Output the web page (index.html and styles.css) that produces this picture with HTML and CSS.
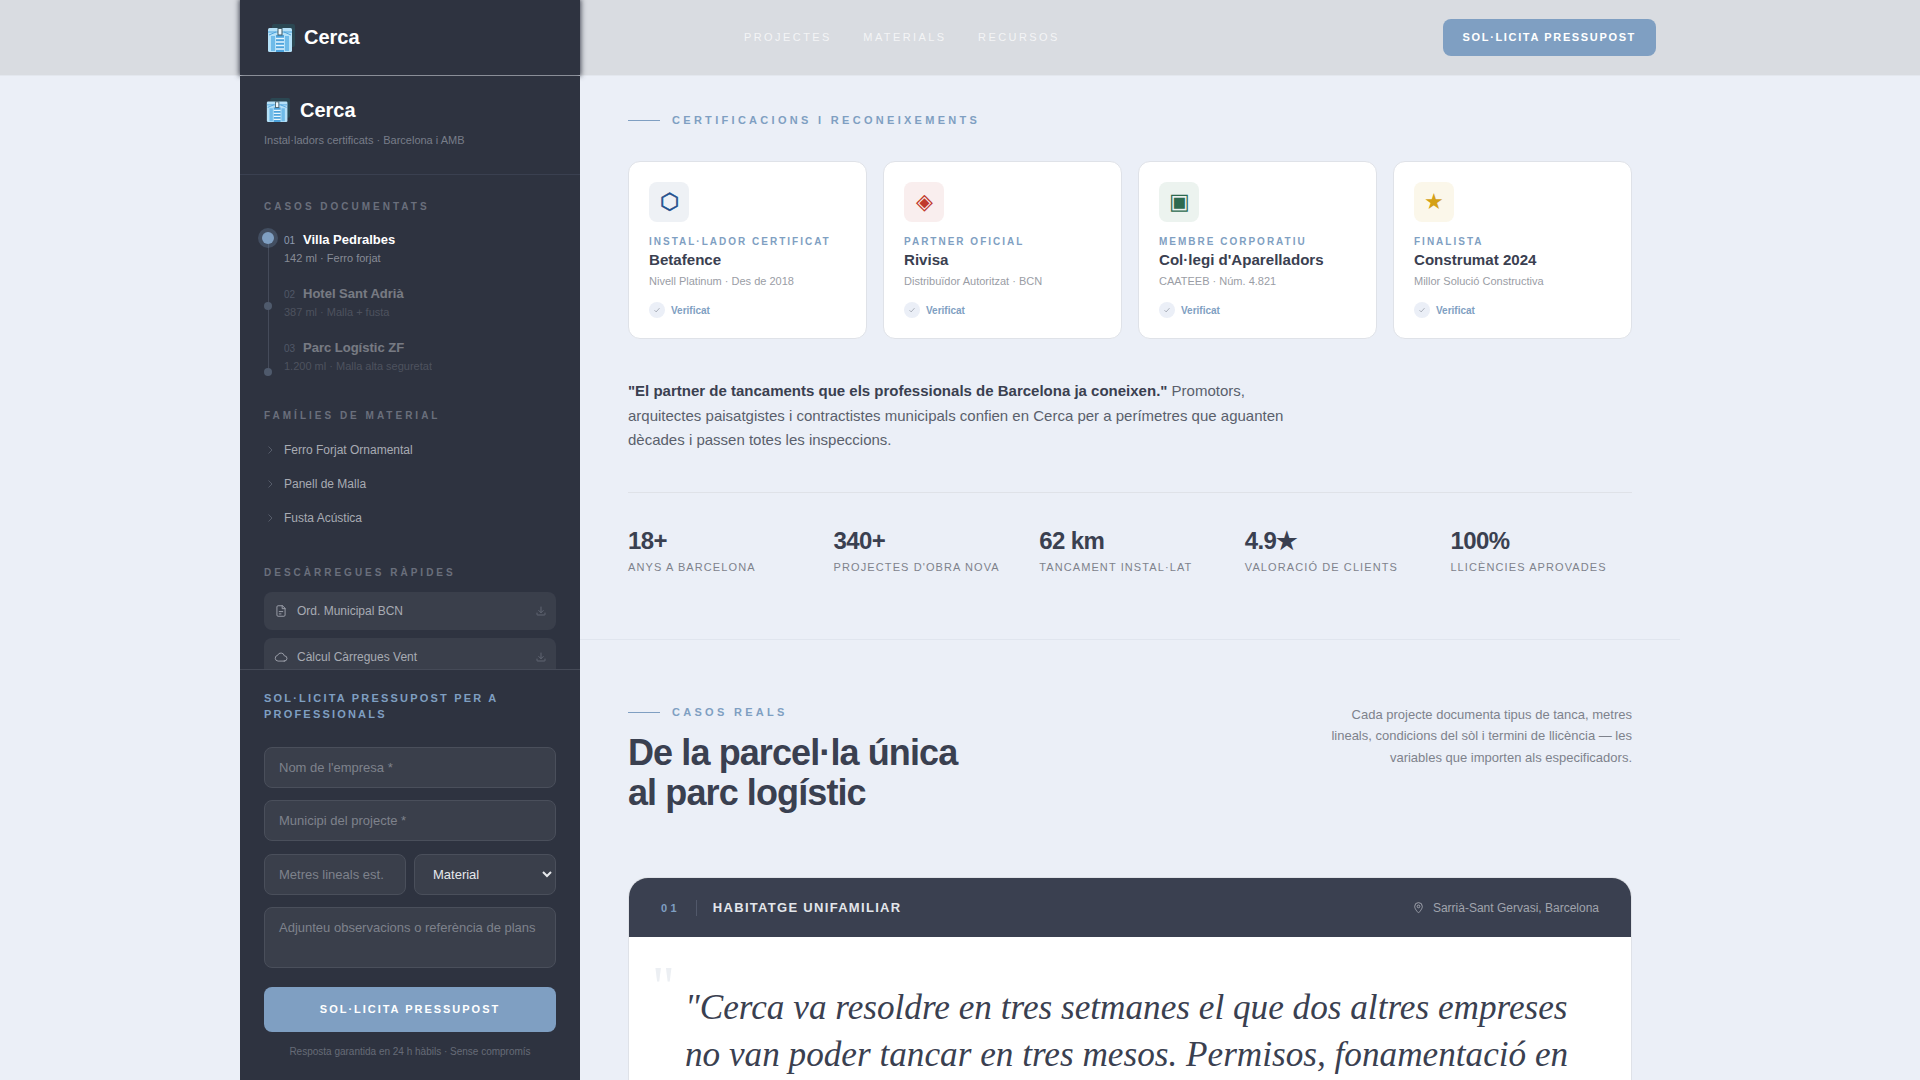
FILE: index.html
```html
<!DOCTYPE html>
<html lang="ca">
<head>
  <meta charset="UTF-8">
  <meta name="viewport" content="width=device-width, initial-scale=1.0">
  <title>Cerca</title>
  <link rel="stylesheet" href="styles.css">
</head>
<body>

  <!-- Top navigation -->
  <header class="topbar">
    <div class="topbar-inner">
      <div class="topbar-brand">
        <svg class="logo-icon" viewBox="0 0 28 28">
          <rect x="5" y="0" width="23" height="23" rx="2" fill="#2b4752"/>
          <rect x="1" y="4" width="24" height="24" rx="1.5" fill="#b5e1f8"/>
          <path d="M1 8h24M2 11l7-3M24 11l-7-3" stroke="#4da3dc" stroke-width="1" fill="none"/>
          <path d="M4 12h4v15H4zM18 12h4v15h-4z" fill="#6fbbe9"/>
          <rect x="9" y="11" width="8" height="17" fill="#4da3dc"/>
          <path d="M9 14.500h8M9 18h8M9 21.500h8M9 25h8" stroke="#e6f6fe" stroke-width="1.4"/>
          <rect x="11" y="4.500" width="4" height="6.500" fill="#eef8fd" stroke="#3f5a66" stroke-width="1"/>
        </svg>
        <span class="logo-text">Cerca</span>
      </div>
      <nav class="topbar-links">
        <a href="#">Projectes</a>
        <a href="#">Materials</a>
        <a href="#">Recursos</a>
      </nav>
      <a class="topbar-cta" href="#">Sol·licita Pressupost</a>
    </div>
  </header>

  <div class="page">

    <!-- Sidebar -->
    <aside class="sidebar">
      <div class="sidebar-scroll">
        <div class="sidebar-head">
          <div class="sidebar-brand">
            <svg class="logo-icon" viewBox="0 0 28 28">
              <rect x="5" y="0" width="23" height="23" rx="2" fill="#2b4752"/>
              <rect x="1" y="4" width="24" height="24" rx="1.5" fill="#b5e1f8"/>
              <path d="M1 8h24M2 11l7-3M24 11l-7-3" stroke="#4da3dc" stroke-width="1" fill="none"/>
              <path d="M4 12h4v15H4zM18 12h4v15h-4z" fill="#6fbbe9"/>
              <rect x="9" y="11" width="8" height="17" fill="#4da3dc"/>
              <path d="M9 14.500h8M9 18h8M9 21.500h8M9 25h8" stroke="#e6f6fe" stroke-width="1.4"/>
              <rect x="11" y="4.500" width="4" height="6.500" fill="#eef8fd" stroke="#3f5a66" stroke-width="1"/>
            </svg>
            <span class="logo-text">Cerca</span>
          </div>
          <p class="sidebar-sub">Instal·ladors certificats · Barcelona i AMB</p>
        </div>

        <div class="side-section side-cases">
          <h4 class="side-label">Casos Documentats</h4>
          <div class="case-wrap">
            <div class="case-rail">
              <span class="rail-dot active"></span>
              <span class="rail-dot"></span>
              <span class="rail-dot"></span>
            </div>
            <ul class="case-list">
              <li class="case-item active">
                <div class="case-title"><span class="case-num">01</span><b>Villa Pedralbes</b></div>
                <div class="case-sub">142 ml · Ferro forjat</div>
              </li>
              <li class="case-item">
                <div class="case-title"><span class="case-num">02</span><b>Hotel Sant Adrià</b></div>
                <div class="case-sub">387 ml · Malla + fusta</div>
              </li>
              <li class="case-item">
                <div class="case-title"><span class="case-num">03</span><b>Parc Logístic ZF</b></div>
                <div class="case-sub">1.200 ml · Malla alta seguretat</div>
              </li>
            </ul>
          </div>
        </div>

        <div class="side-section side-materials">
          <h4 class="side-label">Famílies de Material</h4>
          <ul class="material-list">
            <li><svg viewBox="0 0 24 24"><path d="M9 5l7 7-7 7"/></svg>Ferro Forjat Ornamental</li>
            <li><svg viewBox="0 0 24 24"><path d="M9 5l7 7-7 7"/></svg>Panell de Malla</li>
            <li><svg viewBox="0 0 24 24"><path d="M9 5l7 7-7 7"/></svg>Fusta Acústica</li>
          </ul>
        </div>

        <div class="side-section side-downloads">
          <h4 class="side-label">Descàrregues Ràpides</h4>
          <a class="dl-item" href="#">
            <svg class="dl-icon" viewBox="0 0 24 24"><path d="M14 3H7a2 2 0 0 0-2 2v14a2 2 0 0 0 2 2h10a2 2 0 0 0 2-2V8z"/><path d="M14 3v5h5M9 13h6M9 17h3"/></svg>
            <span>Ord. Municipal BCN</span>
            <svg class="dl-arrow" viewBox="0 0 24 24"><path d="M12 4v11M7.500 11l4.500 4.500 4.500-4.500M4 16v3a1 1 0 0 0 1 1h14a1 1 0 0 0 1-1v-3"/></svg>
          </a>
          <a class="dl-item" href="#">
            <svg class="dl-icon" viewBox="0 0 24 24"><path d="M17.500 19H7a5 5 0 0 1-.8-9.900A6 6 0 0 1 17.700 10h.3a4.500 4.500 0 0 1-.5 9z"/></svg>
            <span>Càlcul Càrregues Vent</span>
            <svg class="dl-arrow" viewBox="0 0 24 24"><path d="M12 4v11M7.500 11l4.500 4.500 4.500-4.500M4 16v3a1 1 0 0 0 1 1h14a1 1 0 0 0 1-1v-3"/></svg>
          </a>
        </div>
      </div>

      <form class="quote-form">
        <h3>Sol·licita Pressupost per a Professionals</h3>
        <input type="text" placeholder="Nom de l'empresa *">
        <input type="text" placeholder="Municipi del projecte *">
        <div class="form-row">
          <input type="text" placeholder="Metres lineals est.">
          <select>
            <option>Material</option>
          </select>
        </div>
        <textarea placeholder="Adjunteu observacions o referència de plans"></textarea>
        <button type="button">Sol·licita Pressupost</button>
        <p class="form-note">Resposta garantida en 24 h hàbils · Sense compromís</p>
      </form>
    </aside>

    <!-- Main content -->
    <main class="main">
      <section class="certs">
        <div class="eyebrow"><span></span>Certificacions i Reconeixements</div>

        <div class="cert-grid">
          <div class="cert-card">
            <div class="cert-icon blue">⬡</div>
            <div class="cert-type">Instal·lador Certificat</div>
            <div class="cert-name">Betafence</div>
            <div class="cert-sub">Nivell Platinum · Des de 2018</div>
            <div class="cert-check"><i><svg viewBox="0 0 24 24"><path d="M6 12.500l4 4 8-9"/></svg></i>Verificat</div>
          </div>
          <div class="cert-card">
            <div class="cert-icon red">◈</div>
            <div class="cert-type">Partner Oficial</div>
            <div class="cert-name">Rivisa</div>
            <div class="cert-sub">Distribuïdor Autoritzat · BCN</div>
            <div class="cert-check"><i><svg viewBox="0 0 24 24"><path d="M6 12.500l4 4 8-9"/></svg></i>Verificat</div>
          </div>
          <div class="cert-card">
            <div class="cert-icon green">▣</div>
            <div class="cert-type">Membre Corporatiu</div>
            <div class="cert-name">Col·legi d'Aparelladors</div>
            <div class="cert-sub">CAATEEB · Núm. 4.821</div>
            <div class="cert-check"><i><svg viewBox="0 0 24 24"><path d="M6 12.500l4 4 8-9"/></svg></i>Verificat</div>
          </div>
          <div class="cert-card">
            <div class="cert-icon gold">★</div>
            <div class="cert-type">Finalista</div>
            <div class="cert-name">Construmat 2024</div>
            <div class="cert-sub">Millor Solució Constructiva</div>
            <div class="cert-check"><i><svg viewBox="0 0 24 24"><path d="M6 12.500l4 4 8-9"/></svg></i>Verificat</div>
          </div>
        </div>

        <p class="intro"><strong>"El partner de tancaments que els professionals de Barcelona ja coneixen."</strong> Promotors, arquitectes paisatgistes i contractistes municipals confien en Cerca per a perímetres que aguanten dècades i passen totes les inspeccions.</p>

        <div class="stats">
          <div><div class="stat-num">18+</div><div class="stat-label">Anys a Barcelona</div></div>
          <div><div class="stat-num">340+</div><div class="stat-label">Projectes d'obra nova</div></div>
          <div><div class="stat-num">62 km</div><div class="stat-label">Tancament instal·lat</div></div>
          <div><div class="stat-num">4.9★</div><div class="stat-label">Valoració de clients</div></div>
          <div><div class="stat-num">100%</div><div class="stat-label">Llicències aprovades</div></div>
        </div>
      </section>

      <section class="cases">
        <div class="cases-head">
          <div>
            <div class="eyebrow"><span></span>Casos Reals</div>
            <h2>De la parcel·la única<br>al parc logístic</h2>
          </div>
          <p>Cada projecte documenta tipus de tanca, metres lineals, condicions del sòl i termini de llicència — les variables que importen als especificadors.</p>
        </div>

        <article class="case-card">
          <div class="case-bar">
            <span class="bar-num">01</span>
            <span class="bar-title">Habitatge Unifamiliar</span>
            <span class="bar-place">
              <svg viewBox="0 0 24 24"><path d="M12 22s7-6.500 7-12a7 7 0 0 0-14 0c0 5.500 7 12 7 12z"/><circle cx="12" cy="10" r="2.500"/></svg>
              Sarrià-Sant Gervasi, Barcelona
            </span>
          </div>
          <div class="case-body">
            <span class="quote-mark">"</span>
            <blockquote>"Cerca va resoldre en tres setmanes el que dos altres empreses no van poder tancar en tres mesos. Permisos, fonamentació en</blockquote>
          </div>
        </article>
      </section>
    </main>

  </div>
</body>
</html>
```

FILE: styles.css
```css
* {
  box-sizing: border-box;
}

html, body {
  height: 1080px;
  overflow: hidden;
}

body {
  font-family: "Liberation Sans", Arial, sans-serif;
  background-color: #ebeff7;
  color: #3a4050;
  margin: 0;
}

ul {
  list-style: none;
  margin: 0;
  padding: 0;
}

a {
  text-decoration: none;
}

/* Top bar */
.topbar {
  height: 76px;
  background-color: #d9dce1;
  border-bottom: 1px solid #e3e7ee;
}

.topbar-inner {
  width: 1440px;
  height: 75px;
  margin: 0 auto;
  display: flex;
  align-items: center;
}

.topbar-brand {
  width: 340px;
  height: 75px;
  padding-left: 27px;
  display: flex;
  align-items: center;
  gap: 9px;
  background-color: #2e3340;
  box-shadow: 0 0 5px 1px rgba(46, 51, 64, 0.85);
}

.logo-icon {
  width: 28px;
  height: 28px;
  flex-shrink: 0;
}

.logo-text {
  font-size: 20px;
  font-weight: 700;
  color: #fff;
}

.topbar-links {
  margin-left: 164px;
  margin-bottom: 2px;
  display: flex;
  gap: 31.5px;
}

.topbar-links a {
  font-size: 11px;
  font-weight: 500;
  letter-spacing: 2.42px;
  text-transform: uppercase;
  color: rgba(255, 255, 255, 0.72);
}

.topbar-cta {
  margin-left: auto;
  margin-right: 24px;
  height: 37px;
  padding: 0 20px 1px;
  display: flex;
  align-items: center;
  background-color: #7f9fc2;
  border-radius: 8px;
  font-size: 11px;
  font-weight: 700;
  letter-spacing: 1.65px;
  text-transform: uppercase;
  color: #fff;
}

/* Page */
.page {
  width: 1440px;
  height: 1004px;
  margin: 0 auto;
  display: flex;
}

/* Sidebar */
.sidebar {
  width: 340px;
  flex-shrink: 0;
  background-color: #2e3340;
  display: flex;
  flex-direction: column;
}

.sidebar-scroll {
  height: 593px;
  overflow: hidden;
}

.sidebar-head {
  padding: 20px 24px 24px;
  height: 99px;
  border-bottom: 1px solid #3a4050;
}

.sidebar-brand {
  height: 28px;
  display: flex;
  align-items: center;
  gap: 10px;
  padding-left: 2px;
}

.sidebar-brand .logo-icon {
  width: 24px;
  height: 24px;
}

.sidebar-sub {
  margin: 10px 0 0;
  font-size: 11px;
  color: #787d89;
}

.side-section {
  padding: 0 24px;
}

.side-label {
  margin: 0;
  font-size: 10px;
  font-weight: 700;
  letter-spacing: 3px;
  line-height: 12px;
  text-transform: uppercase;
  color: #6a6f7c;
}

.side-cases {
  padding-top: 26px;
}

/* Timeline rail sits beside the list of cases */
.case-wrap {
  position: relative;
  margin-top: 19px;
}

.case-rail {
  position: absolute;
  left: -2px;
  top: 0;
  width: 12px;
  height: 144px;
  display: flex;
  flex-direction: column;
  justify-content: space-between;
  align-items: center;
}

.case-rail::before {
  content: "";
  position: absolute;
  left: 5.5px;
  top: 6px;
  bottom: 4px;
  width: 1px;
  background-color: #454b5a;
}

.rail-dot {
  position: relative;
  width: 8px;
  height: 8px;
  border-radius: 50%;
  background-color: #4f5a6c;
}

.rail-dot.active {
  width: 12px;
  height: 12px;
  background-color: #7f9fc2;
  box-shadow: 0 0 0 4px rgba(127, 159, 194, 0.25);
}

.case-item {
  height: 54px;
  padding-left: 20px;
  opacity: 0.35;
}

.case-item.active {
  opacity: 1;
}

.case-title {
  display: flex;
  align-items: baseline;
  height: 16px;
  line-height: 16px;
}

.case-num {
  width: 19px;
  font-size: 10px;
  color: #8e9bb0;
}

.case-title b {
  font-size: 13px;
  color: #fff;
}

.case-sub {
  margin-top: 4px;
  font-size: 11px;
  line-height: 13px;
  color: #878b96;
}

.side-materials {
  padding-top: 16px;
}

.material-list {
  margin-top: 11px;
}

.material-list li {
  height: 34px;
  display: flex;
  align-items: center;
  font-size: 12px;
  color: #a8abb3;
}

.material-list svg {
  width: 12px;
  height: 12px;
  margin-right: 8px;
  fill: none;
  stroke: #555b69;
  stroke-width: 2;
}

.side-downloads {
  padding-top: 32px;
}

.dl-item {
  height: 38px;
  margin-top: 8px;
  padding: 0 9px 0 10px;
  display: flex;
  align-items: center;
  background-color: #3a3f4b;
  border-radius: 8px;
  font-size: 12px;
  color: #a8abb3;
}

.side-label + .dl-item {
  margin-top: 13px;
}

.dl-item span {
  flex: 1;
}

.dl-item svg {
  fill: none;
  stroke-width: 1.6;
  stroke-linecap: round;
  stroke-linejoin: round;
}

.dl-icon {
  width: 14px;
  height: 14px;
  margin-right: 9px;
  stroke: #9fa3ad;
}

.dl-arrow {
  width: 12px;
  height: 12px;
  stroke: #6a6f7c;
}

/* Quote form */
.quote-form {
  flex: 1;
  padding: 20px 24px 0;
  border-top: 1px solid #454a57;
  background-color: #2e3340;
}

.quote-form h3 {
  margin: 0 0 25px;
  font-size: 11px;
  line-height: 16px;
  font-weight: 700;
  letter-spacing: 2.2px;
  text-transform: uppercase;
  color: #7f9fc2;
}

.quote-form input,
.quote-form select,
.quote-form textarea {
  display: block;
  width: 100%;
  height: 41px;
  margin-bottom: 12.3px;
  padding: 0 14px;
  background-color: #3a3f4b;
  border: 1px solid #4a4f5b;
  border-radius: 8px;
  font-family: inherit;
  font-size: 13px;
  color: #e6e8ec;
}

.quote-form ::placeholder {
  color: #7e828c;
  opacity: 1;
}

.form-row {
  display: grid;
  grid-template-columns: 1fr 1fr;
  gap: 8px;
}

.quote-form select {
  padding: 0 0 0 14px;
}

.quote-form textarea {
  height: 61px;
  padding: 12px 14px;
  margin-bottom: 19px;
  resize: none;
}

.quote-form button {
  display: block;
  width: 100%;
  height: 45px;
  background-color: #7f9fc2;
  border: none;
  border-radius: 8px;
  font-family: inherit;
  font-size: 11px;
  font-weight: 700;
  letter-spacing: 1.98px;
  text-transform: uppercase;
  color: #fff;
}

.form-note {
  margin: 14px 0 0;
  text-align: center;
  font-size: 10px;
  color: #666b77;
}

/* Main */
.main {
  flex: 1;
  min-width: 0;
  overflow: hidden;
}

.certs {
  height: 564px;
  padding: 37px 48px 0;
  border-bottom: 1px solid #e0e5ee;
}

.eyebrow {
  display: flex;
  align-items: center;
  gap: 12px;
  height: 14px;
  font-size: 11px;
  font-weight: 700;
  letter-spacing: 3.3px;
  text-transform: uppercase;
  color: #7f9fc2;
}

.eyebrow span {
  width: 32px;
  height: 1px;
  background-color: #7f9fc2;
}

.cert-grid {
  margin-top: 34px;
  display: grid;
  grid-template-columns: repeat(4, 1fr);
  gap: 16px;
}

.cert-card {
  height: 178px;
  padding: 20px;
  background-color: #fff;
  border: 1px solid #dfe2e8;
  border-radius: 12px;
}

.cert-icon {
  width: 40px;
  height: 40px;
  display: flex;
  align-items: center;
  justify-content: center;
  border-radius: 8px;
  font-size: 22px;
}

.cert-icon.blue { background-color: #eef1f5; color: #1e4f8c; -webkit-text-stroke: 0.6px #1e4f8c; }
.cert-icon.red { background-color: #f9eeee; color: #c0392b; }
.cert-icon.green { background-color: #ecf3ef; color: #2d6a4f; }
.cert-icon.gold { background-color: #fbf7ea; color: #d4a017; }

.cert-type {
  margin-top: 14px;
  font-size: 10px;
  line-height: 12px;
  font-weight: 700;
  letter-spacing: 2px;
  text-transform: uppercase;
  color: #7f9fc2;
}

.cert-name {
  margin-top: 3px;
  font-size: 15.1px;
  line-height: 18px;
  font-weight: 700;
  color: #3a4050;
}

.cert-sub {
  margin-top: 5px;
  font-size: 11px;
  line-height: 14px;
  color: #9a9da5;
}

.cert-check {
  margin-top: 14px;
  display: flex;
  align-items: center;
  gap: 6px;
  font-size: 10px;
  font-weight: 700;
  color: #7f9fc2;
}

.cert-check i {
  width: 16px;
  height: 16px;
  display: flex;
  align-items: center;
  justify-content: center;
  border-radius: 50%;
  background-color: #ebeff7;
}

.cert-check svg {
  width: 10px;
  height: 10px;
  fill: none;
  stroke: #8a8f9a;
  stroke-width: 1.6;
}

.intro {
  margin: 40px 0 0;
  max-width: 680px;
  font-size: 15px;
  line-height: 24.5px;
  color: #5a5f6c;
}

.intro strong {
  color: #3a4050;
}

.stats {
  margin-top: 39px;
  padding-top: 33px;
  border-top: 1px solid #dfe2e8;
  display: grid;
  grid-template-columns: repeat(5, 1fr);
  gap: 24px;
}

.stat-num {
  font-size: 24px;
  line-height: 30px;
  font-weight: 700;
  letter-spacing: -0.6px;
  color: #3a4050;
}

.stat-label {
  margin-top: 5px;
  font-size: 11px;
  line-height: 13px;
  letter-spacing: 1.1px;
  text-transform: uppercase;
  color: #7e828c;
}

.cases {
  padding: 64px 48px 0;
}

.cases-head {
  display: flex;
  justify-content: space-between;
  align-items: flex-start;
}

.cases-head .eyebrow {
  margin-top: 1px;
}

.cases-head h2 {
  margin: 14px 0 0;
  font-size: 36px;
  line-height: 40px;
  font-weight: 700;
  letter-spacing: -0.9px;
  color: #3a4050;
}

.cases-head p {
  margin: 0;
  width: 320px;
  text-align: right;
  font-size: 13px;
  line-height: 21.45px;
  color: #7e828c;
}

.case-card {
  margin-top: 64px;
  height: 300px;
  background-color: #fff;
  border: 1px solid #dfe2e8;
  border-radius: 20px;
  overflow: hidden;
}

.case-bar {
  height: 59px;
  padding: 0 32px;
  display: flex;
  align-items: center;
  background-color: #3a4050;
}

.bar-num {
  padding-right: 16px;
  border-right: 1px solid #51586a;
  font-size: 11px;
  font-weight: 700;
  line-height: 16px;
  letter-spacing: 3.3px;
  color: #7f9fc2;
}

.bar-title {
  margin-left: 16px;
  font-size: 13px;
  font-weight: 700;
  letter-spacing: 1.3px;
  text-transform: uppercase;
  color: #e3e6eb;
}

.bar-place {
  margin-left: auto;
  display: flex;
  align-items: center;
  gap: 8px;
  font-size: 12px;
  color: #a0a4ad;
}

.bar-place svg {
  width: 13px;
  height: 13px;
  fill: none;
  stroke: #a0a4ad;
  stroke-width: 1.8;
}

.case-body {
  position: relative;
  padding: 48px 48px 0 56px;
}

.quote-mark {
  position: absolute;
  left: 23px;
  top: 10px;
  font-family: "Liberation Serif", serif;
  font-size: 56px;
  line-height: 80px;
  color: #eceff3;
}

blockquote {
  margin: 0;
  font-family: "Liberation Serif", serif;
  font-style: italic;
  font-size: 35.2px;
  line-height: 46.7px;
  color: #3a4050;
}
```
